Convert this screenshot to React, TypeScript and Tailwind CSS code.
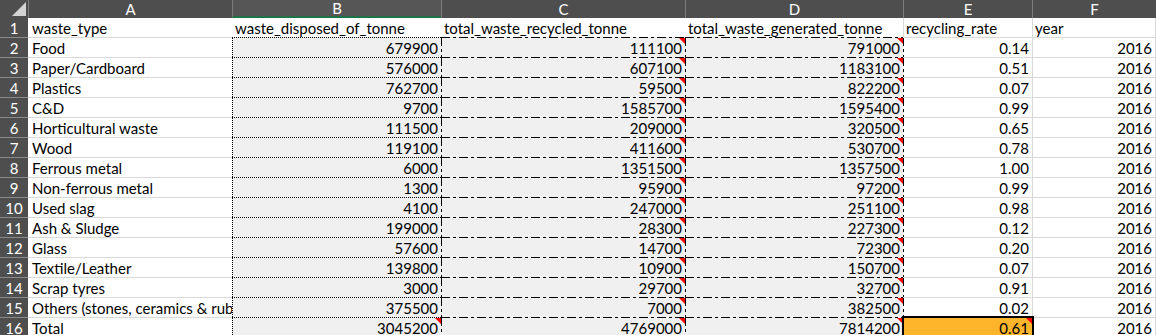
import type { ReactNode } from "react";

type Row = [string, number, number, number, string];

const ROWS: Row[] = [
  ["Food", 679900, 111100, 791000, "0.14"],
  ["Paper/Cardboard", 576000, 607100, 1183100, "0.51"],
  ["Plastics", 762700, 59500, 822200, "0.07"],
  ["C&D", 9700, 1585700, 1595400, "0.99"],
  ["Horticultural waste", 111500, 209000, 320500, "0.65"],
  ["Wood", 119100, 411600, 530700, "0.78"],
  ["Ferrous metal", 6000, 1351500, 1357500, "1.00"],
  ["Non-ferrous metal", 1300, 95900, 97200, "0.99"],
  ["Used slag", 4100, 247000, 251100, "0.98"],
  ["Ash & Sludge", 199000, 28300, 227300, "0.12"],
  ["Glass", 57600, 14700, 72300, "0.20"],
  ["Textile/Leather", 139800, 10900, 150700, "0.07"],
  ["Scrap tyres", 3000, 29700, 32700, "0.91"],
  ["Others (stones, ceramics & rubber)", 375500, 7000, 382500, "0.02"],
  ["Total", 3045200, 4769000, 7814200, "0.61"],
];

// dash-dot borders (top + left) like Excel's "dash dot" line style
const DASH_TL =
  "border-t border-l border-transparent bg-[#f0f0f0] [background-origin:border-box] [background-repeat:no-repeat] [background-size:100%_1px,1px_100%] [background-image:repeating-linear-gradient(90deg,#000_0_9px,transparent_9px_12px,#000_12px_15px,transparent_15px_18px),repeating-linear-gradient(180deg,#000_0_9px,transparent_9px_12px,#000_12px_15px,transparent_15px_18px)]";

const DASH_L =
  "border-t border-l border-l-transparent border-t-[#d9d9d9] [background-origin:border-box] [background-repeat:no-repeat] [background-size:1px_100%] [background-image:repeating-linear-gradient(180deg,#000_0_9px,transparent_9px_12px,#000_12px_15px,transparent_15px_18px)]";

function Marker() {
  return (
    <span className="absolute right-0 top-0 h-0 w-0 border-l-[6px] border-t-[6px] border-l-transparent border-t-[#ff0000]" />
  );
}

function Num({
  className,
  children,
  marker,
}: {
  className: string;
  children: ReactNode;
  marker?: boolean;
}) {
  return (
    <div
      className={`relative flex shrink-0 items-center justify-end pr-[3px] pt-[1px] ${className}`}
    >
      {children}
      {marker && <Marker />}
    </div>
  );
}

function ColHeader({
  label,
  width,
  active,
}: {
  label: string;
  width: string;
  active?: boolean;
}) {
  return (
    <div
      className={`flex shrink-0 items-center justify-center border-l border-[#7c7c7c] text-[15px] text-white ${width} ${
        active ? "border-b-2 border-b-[#217346] bg-[#565656]" : ""
      }`}
    >
      {label}
    </div>
  );
}

export default function App() {
  return (
    <div className="h-[335px] w-[1156px] overflow-hidden bg-white font-['Lato',sans-serif] text-[15px] leading-none text-black">
      {/* column headers */}
      <div className="flex h-[18px] bg-[#4e4e4e]">
        <div className="flex w-[28px] shrink-0 items-end justify-end pb-[2px] pr-[2px]">
          <svg width="14" height="14" viewBox="0 0 14 14">
            <polygon points="0,14 14,14 14,0" fill="#d4d4d4" />
          </svg>
        </div>
        <ColHeader label="A" width="w-[204px]" />
        <ColHeader label="B" width="w-[209px]" active />
        <ColHeader label="C" width="w-[244px]" />
        <ColHeader label="D" width="w-[218px]" />
        <ColHeader label="E" width="w-[129px]" />
        <ColHeader label="F" width="w-[124px]" />
      </div>

      {/* row 1 */}
      <div className="flex h-[19px]">
        <div className="flex w-[28px] shrink-0 items-center justify-center bg-[#4e4e4e] pt-[1px] text-white">
          1
        </div>
        <div className="flex w-[204px] shrink-0 items-center pl-[4px] pt-[1px]">waste_type</div>
        <div className="flex w-[209px] shrink-0 items-center border-l border-white pl-[2px] pt-[1px]">
          waste_disposed_of_tonne
        </div>
        <div className="flex w-[244px] shrink-0 items-center border-l border-white pl-[2px] pt-[1px]">
          total_waste_recycled_tonne
        </div>
        <div className="flex w-[218px] shrink-0 items-center border-l border-white pl-[2px] pt-[1px]">
          total_waste_generated_tonne
        </div>
        <div className="flex w-[129px] shrink-0 items-center border-l border-[#d9d9d9] pl-[2px] pt-[1px]">
          recycling_rate
        </div>
        <div className="flex w-[124px] shrink-0 items-center border-x border-[#d9d9d9] pl-[2px] pt-[1px]">
          year
        </div>
      </div>

      {ROWS.map(([type, disposed, recycled, generated, rate], i) => {
        const last = i === ROWS.length - 1;
        return (
          <div key={type} className="flex h-[20px]">
            <div className="flex w-[28px] shrink-0 items-center justify-center border-t border-[#8a8a8a] bg-[#4e4e4e] pt-[1px] text-white">
              {i + 2}
            </div>
            <div className="flex w-[204px] shrink-0 items-center overflow-hidden whitespace-nowrap border-t border-[#d9d9d9] pl-[4px] pt-[1px]">
              {type}
            </div>
            <Num
              className="w-[209px] border-l border-t border-dotted border-black bg-[#f0f0f0]"
              marker={last}
            >
              {disposed}
            </Num>
            <Num className={`w-[244px] ${DASH_TL}`} marker>
              {recycled}
            </Num>
            <Num className={`w-[218px] ${DASH_TL}`} marker>
              {generated}
            </Num>
            {last ? (
              <div
                className={`relative flex w-[129px] shrink-0 items-center justify-end bg-[#feb52b] pr-[3px] pt-[1px] ${DASH_L}`}
              >
                {rate}
                <Marker />
                <span className="absolute -bottom-[2px] -left-[2px] -right-[2px] -top-[2px] z-10 border-2 border-black" />
              </div>
            ) : (
              <Num className={`w-[129px] bg-white ${DASH_L}`}>{rate}</Num>
            )}
            <Num className="w-[124px] border-x border-t border-[#d9d9d9]">2016</Num>
          </div>
        );
      })}
    </div>
  );
}
